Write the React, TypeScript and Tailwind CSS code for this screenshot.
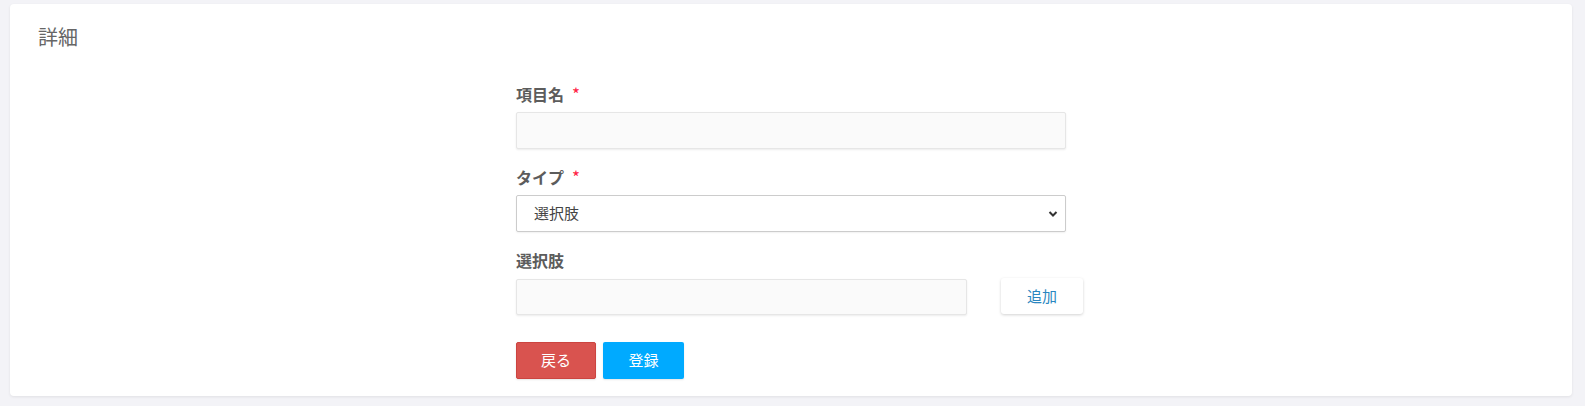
import React from "react";

export default function App() {
  const font = { fontFamily: '"Noto Sans CJK JP", "Noto Sans", sans-serif' };
  return (
    <div className="w-[1585px] h-[406px] bg-[#f3f3f7] pt-[4px] pl-[10px]" style={font}>
      <div className="w-[1562px] h-[392px] bg-white rounded-[4px] shadow-[0_1px_3px_rgba(0,0,0,0.08)] pt-[20px] pl-[28px]">
        <h2 className="text-[20px] leading-[26px] text-[#666666] font-normal">詳細</h2>
        <div className="ml-[478px] mt-[33px] w-[567px]">
          <label className="flex items-center h-[22px] text-[16px] font-bold text-[#5c5c5c]">
            項目名<span className="ml-[8px] text-[#ff2244] font-normal text-[17px]">*</span>
          </label>
          <input
            className="mt-[7px] block w-[550px] h-[37px] bg-[#fafafa] border border-[#e6e6e6] rounded-[2px] shadow-[0_1px_2px_rgba(0,0,0,0.08)] outline-none"
          />
          <label className="mt-[17px] flex items-center h-[22px] text-[16px] font-bold text-[#5c5c5c]">
            タイプ<span className="ml-[8px] text-[#ff2244] font-normal text-[17px]">*</span>
          </label>
          <div className="mt-[7px] relative w-[550px] h-[37px] bg-white border border-[#cccccc] rounded-[2px] shadow-[0_1px_2px_rgba(0,0,0,0.06)] flex items-center pl-[17px] text-[15px] text-[#444]">
            選択肢
            <svg className="absolute right-[7px] top-[14px]" width="10" height="8" viewBox="0 0 10 8">
              <path d="M1.5 2 L5 5.5 L8.5 2" fill="none" stroke="#333" strokeWidth="2" />
            </svg>
          </div>
          <label className="mt-[17px] flex items-center h-[22px] text-[16px] font-bold text-[#5c5c5c]">
            選択肢
          </label>
          <div className="mt-[8px] flex items-start">
            <input className="block w-[451px] h-[36px] bg-[#fafafa] border border-[#e6e6e6] rounded-[2px] shadow-[0_1px_2px_rgba(0,0,0,0.08)] outline-none" />
            <button className="ml-[34px] -mt-[1px] w-[82px] h-[36px] bg-white rounded-[3px] shadow-[0_1px_3px_rgba(0,0,0,0.18)] text-[15px] text-[#2a86c0]">
              追加
            </button>
          </div>
          <div className="mt-[27px] flex gap-[7px]">
            <button className="w-[80px] h-[37px] bg-[#d9534f] border border-[#cc4440] rounded-[2px] text-white text-[15px] shadow-[0_1px_2px_rgba(0,0,0,0.1)]">
              戻る
            </button>
            <button className="w-[81px] h-[37px] bg-[#00aaff] rounded-[2px] text-white text-[15px] shadow-[0_1px_2px_rgba(0,0,0,0.1)]">
              登録
            </button>
          </div>
        </div>
      </div>
    </div>
  );
}
